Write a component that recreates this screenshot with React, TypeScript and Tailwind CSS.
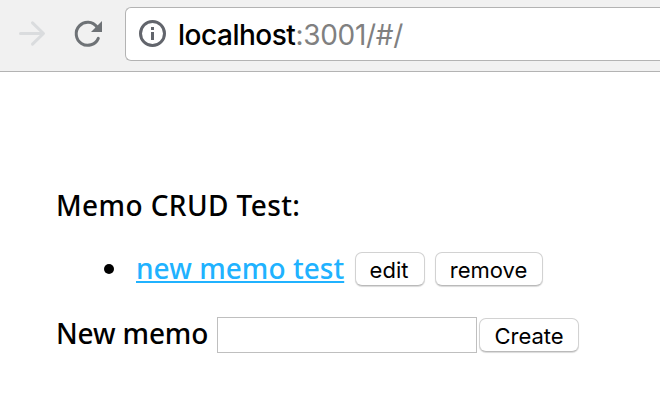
import type { ReactNode } from 'react';

function Toolbar() {
  return (
    <header className="flex h-[72px] items-start border-b border-[#b3b3b3] bg-[#f1f1f1] pl-[18px] pt-[7px]">
      <svg className="mt-[13px] h-7 w-7 shrink-0" viewBox="0 0 28 28" fill="none" stroke="#dadcde" strokeWidth="3" strokeLinecap="round" strokeLinejoin="round">
        <path d="M2.5 13.5H25M14.5 2.8L25.5 13.5L14.5 24.2" />
      </svg>
      <svg className="ml-[27px] mt-[12px] h-[30px] w-[30px] shrink-0" viewBox="0 0 30 30" fill="none">
        <path d="M24 8A11.5 11.5 0 1 0 25.3 19.3" stroke="#6e7276" strokeWidth="3" strokeLinecap="round" />
        <path d="M29 2V13H18Z" fill="#6e7276" />
      </svg>
      <div className="ml-[22px] flex h-[54px] flex-1 items-center rounded-l-[6px] border border-r-0 border-[#b3b3b3] bg-white pl-[13px]">
        <svg className="h-7 w-7 shrink-0" viewBox="0 0 28 28" fill="none">
          <circle cx="13.5" cy="13.5" r="12" stroke="#62656c" strokeWidth="3" />
          <path d="M12 7h3v3h-3zM12 12h3v8h-3z" fill="#62656c" />
        </svg>
        <div className="ml-[11px] whitespace-nowrap pt-[2px] font-['Inter',sans-serif] text-[28px] font-medium leading-[52px] tracking-[-0.48px] text-[#808080]">
          <span className="text-black">localhost</span>
          <span className="font-normal tracking-[-0.3px]">:3001/#/</span>
        </div>
      </div>
    </header>
  );
}

function Button({ className, children }: { className: string; children: ReactNode }) {
  return (
    <button className={`flex h-[34px] items-center justify-center rounded-[7px] border border-[#d2d2d2] border-b-[#bababa] bg-white pt-[2px] font-['Inter',sans-serif] text-[22px] font-normal leading-none text-black shadow-[0_1px_1px_#00000026] ${className}`}>
      {children}
    </button>
  );
}

export default function App() {
  return (
    <div className="h-[400px] overflow-hidden bg-white font-['Noto_Sans',sans-serif] text-[28px] font-medium text-black">
      <Toolbar />
      <main className="pl-14 pt-[114px]">
        <p className="h-10 whitespace-nowrap leading-[38px] tracking-[0.4px]">Memo CRUD Test:</p>
        <ul className="mt-[23px]">
          <li className="flex h-10 items-center">
            <span className="ml-12 h-[10px] w-[10px] rounded-full bg-black" />
            <a href="#/" className="ml-[22px] w-[208px] whitespace-nowrap pb-[2px] leading-[38px] tracking-[0.05px] text-[#20b2ff] underline decoration-2 underline-offset-[2px] [text-decoration-skip-ink:none]">new memo test</a>
            <Button className="ml-[11px] w-[70px] pr-[2px]">edit</Button>
            <Button className="ml-[10px] w-[108px] pr-px">remove</Button>
          </li>
        </ul>
        <form className="mt-[26px] flex h-10 items-center">
          <label htmlFor="memo" className="w-[161px] whitespace-nowrap pb-1 leading-[38px] tracking-[-0.15px]">New memo</label>
          <input id="memo" className="h-9 w-[260px] border border-[#bfbfbf] bg-white px-1 outline-none" />
          <Button className="ml-[2px] w-[100px]">Create</Button>
        </form>
      </main>
    </div>
  );
}
